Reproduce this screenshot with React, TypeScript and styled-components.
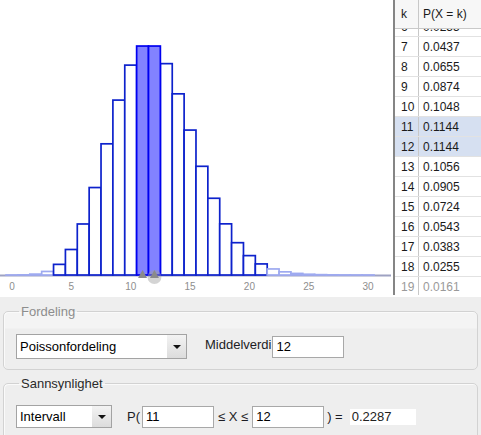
import React from 'react';
import styled, { createGlobalStyle } from 'styled-components';

const MEAN = 12;
const UNIT_X = 11.87;
const ORIGIN_X = 12;
const AXIS_Y = 275;
const SCALE_Y = 2002;

function poisson(k: number) {
  let p = Math.exp(-MEAN);
  for (let i = 1; i <= k; i++) p = (p * MEAN) / i;
  return p;
}

const probs = Array.from({ length: 31 }, (_, k) => poisson(k));
const selected = [11, 12];
const tableRows = Array.from({ length: 14 }, (_, i) => i + 6);

const GlobalStyle = createGlobalStyle`
  html, body {
    margin: 0;
    padding: 0;
    background: #eeeeee;
  }
  body {
    font-family: "Liberation Sans", Arial, sans-serif;
  }
`;

const Frame = styled.div`
  width: 481px;
  height: 435px;
  overflow: hidden;
  background: #eeeeee;
`;

const Top = styled.div`
  display: flex;
  height: 297px;
  background: #ffffff;
`;

const Chart = styled.svg`
  display: block;
  width: 393px;
  height: 297px;
  flex: none;
`;

const Table = styled.div`
  flex: 1;
  display: flex;
  flex-direction: column;
  border-left: 2px solid #858585;
  box-shadow: inset 1px 0 0 #c4c4c4;
  height: 295px;
  overflow: hidden;
  font-size: 12px;
  color: #1a1a1a;
`;

const HeadRow = styled.div`
  display: flex;
  height: 28px;
  flex: none;
  background: #f7f7f7;
  border-bottom: 1px solid #c9c9c9;
  position: relative;
  z-index: 1;
`;

const Body = styled.div`
  flex: 1;
  overflow: hidden;
`;

const BodyInner = styled.div`
  margin-top: -12px;
`;

const Row = styled.div<{ $hi?: boolean; $faded?: boolean }>`
  display: flex;
  height: 19px;
  border-bottom: 1px solid #e2e2e2;
  background: ${(p) => (p.$hi ? '#d6e0f1' : '#ffffff')};
  color: ${(p) => (p.$faded ? '#9a9a9a' : '#1a1a1a')};
`;

const KCell = styled.div`
  width: 23px;
  padding-left: 5px;
  box-sizing: border-box;
  border-right: 1px solid #c8c8c8;
  display: flex;
  align-items: center;
  margin-left: 1px;
`;

const PCell = styled.div`
  flex: 1;
  padding-left: 4px;
  display: flex;
  align-items: center;
`;

const Panel = styled.div`
  padding: 0 3px;
  font-size: 13px;
`;

const Group = styled.fieldset<{ $first?: boolean }>`
  margin: ${(p) => (p.$first ? '7px' : '6px')} 0 0;
  padding: ${(p) => (p.$first ? '15px 12px 10px' : '14px 12px 12px')};
  border: 1px solid #d2d2d2;
  border-radius: 5px;
  box-shadow: inset 1px 1px 0 #fafafa;
  background: ${(p) =>
    p.$first ? 'linear-gradient(#f4f4f4 0, #f4f4f4 16px, #eeeeee 17px)' : '#eeeeee'};
`;

const Legend = styled.legend<{ $muted?: boolean }>`
  padding: 0 2px;
  margin-left: 3px;
  font-size: 13px;
  line-height: 15px;
  color: ${(p) => (p.$muted ? '#8d8d8d' : '#2a2a2a')};
`;

const Line = styled.div`
  display: flex;
  align-items: center;
`;

const Select = styled.div<{ $w: number; $h: number }>`
  display: flex;
  width: ${(p) => p.$w}px;
  height: ${(p) => p.$h}px;
  box-sizing: border-box;
  border: 1px solid #a3a3a3;
  background: #ffffff;
  flex: none;
`;

const SelectText = styled.div`
  flex: 1;
  display: flex;
  align-items: center;
  padding-left: 3px;
  color: #000;
`;

const SelectArrow = styled.div`
  width: 19px;
  display: flex;
  align-items: center;
  justify-content: center;
  background: linear-gradient(#f3f3f3, #dcdcdc);
  &::after {
    content: '';
    border-left: 4px solid transparent;
    border-right: 4px solid transparent;
    border-top: 4px solid #111;
  }
`;

const Label = styled.span<{ $gap?: number; $dy?: number }>`
  margin-left: ${(p) => p.$gap ?? 0}px;
  position: relative;
  top: ${(p) => p.$dy ?? 0}px;
  color: #1c1c24;
  white-space: nowrap;
`;

const Field = styled.div<{ $gap?: number; $h?: number }>`
  margin-left: ${(p) => p.$gap ?? 0}px;
  width: 72px;
  height: ${(p) => p.$h ?? 22}px;
  box-sizing: border-box;
  border: 1px solid #a8a8a8;
  background: #ffffff;
  display: flex;
  align-items: center;
  padding-left: 3px;
  color: #000;
  flex: none;
`;

const Result = styled.div`
  margin-left: 7px;
  width: 66px;
  height: 16px;
  background: #ffffff;
  display: flex;
  align-items: center;
  padding-left: 2px;
  box-sizing: border-box;
  color: #222;
`;

const xOf = (k: number) => ORIGIN_X + UNIT_X * k;

const Bar = ({ k }: { k: number }) => {
  const p = probs[k];
  const h = p * SCALE_Y;
  const isSel = selected.includes(k);
  const faint = h < 8;
  return (
    <rect
      x={xOf(k - 0.5)}
      y={AXIS_Y - h}
      width={UNIT_X}
      height={h}
      fill={isSel ? '#8282ff' : '#ffffff'}
      stroke={isSel ? '#0000f0' : faint ? '#9eaaf0' : '#0d22cc'}
      strokeWidth={1.7}
    />
  );
};

const Graph = () => (
  <Chart viewBox="0 0 393 297">
    <line x1={0} y1={AXIS_Y + 0.5} x2={391} y2={AXIS_Y + 0.5} stroke="#9ea2c2" strokeWidth={2} />
    {probs.map((_, k) => (selected.includes(k) ? null : <Bar key={k} k={k} />))}
    {selected.map((k) => (
      <Bar key={k} k={k} />
    ))}
    {[0, 5, 10, 15, 20, 25, 30].map((v) => (
      <text
        key={v}
        x={xOf(v)}
        y={290}
        textAnchor="middle"
        fontSize={10}
        fill="#8e8e8e"
        fontFamily="Liberation Sans, Arial, sans-serif"
      >
        {v}
      </text>
    ))}
    <circle cx={xOf(12)} cy={AXIS_Y + 2} r={7} fill="rgba(160,160,160,0.45)" />
    {selected.map((k) => (
      <polygon
        key={k}
        points={`${xOf(k) - 4.5},${AXIS_Y + 3} ${xOf(k) + 4.5},${AXIS_Y + 3} ${xOf(k)},${AXIS_Y - 5}`}
        fill="#8a8a8a"
      />
    ))}
  </Chart>
);

const ProbTable = () => (
  <Table>
    <HeadRow>
      <KCell>k</KCell>
      <PCell>P(X = k)</PCell>
    </HeadRow>
    <Body>
      <BodyInner>
        {tableRows.map((k) => (
          <Row key={k} $hi={selected.includes(k)} $faded={k === 19}>
            <KCell>{k}</KCell>
            <PCell>{probs[k].toFixed(4)}</PCell>
          </Row>
        ))}
      </BodyInner>
    </Body>
  </Table>
);

export default function App() {
  return (
    <>
      <GlobalStyle />
      <Frame>
        <Top>
          <Graph />
          <ProbTable />
        </Top>
        <Panel>
          <Group $first>
            <Legend $muted>Fordeling</Legend>
            <Line>
              <Select $w={171} $h={25}>
                <SelectText>Poissonfordeling</SelectText>
                <SelectArrow />
              </Select>
              <Label $gap={18} $dy={-2}>
                Middelverdi
              </Label>
              <Field $gap={1}>12</Field>
            </Line>
          </Group>
          <Group>
            <Legend>Sannsynlighet</Legend>
            <Line>
              <Select $w={96} $h={23}>
                <SelectText>Intervall</SelectText>
                <SelectArrow />
              </Select>
              <Label $gap={15}>P(</Label>
              <Field $gap={2}>11</Field>
              <Label $gap={4}>≤ X ≤</Label>
              <Field $gap={4}>12</Field>
              <Label $gap={3}>) =</Label>
              <Result>0.2287</Result>
            </Line>
          </Group>
        </Panel>
      </Frame>
    </>
  );
}
